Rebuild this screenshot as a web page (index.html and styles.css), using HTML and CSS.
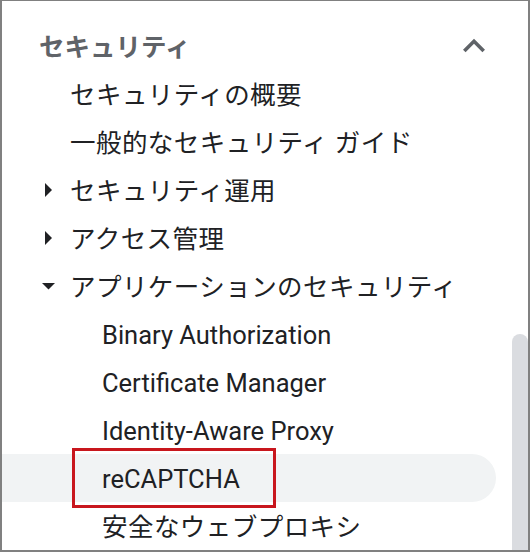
FILE: index.html
```html
<!DOCTYPE html>
<html lang="ja">
<head>
<meta charset="utf-8">
<title>セキュリティ</title>
<link rel="stylesheet" href="styles.css">
</head>
<body>
<div class="frame">
  <nav class="nav">
    <div class="nav-head">
      <span class="nav-title">セキュリティ</span>
      <svg class="chevron" viewBox="0 0 24 24" width="44" height="44"><path d="M12 8l-6 6 1.41 1.41L12 10.83l4.59 4.58L18 14z"/></svg>
    </div>
    <ul class="tree">
      <li class="row lvl1"><span class="label ja">セキュリティの概要</span></li>
      <li class="row lvl1"><span class="label ja">一般的なセキュリティ ガイド</span></li>
      <li class="row lvl1 has-toggle">
        <span class="toggle"><svg viewBox="0 0 14 14" width="14" height="14"><polygon points="3,0 10,7 3,14"/></svg></span>
        <span class="label ja">セキュリティ運用</span>
      </li>
      <li class="row lvl1 has-toggle">
        <span class="toggle"><svg viewBox="0 0 14 14" width="14" height="14"><polygon points="3,0 10,7 3,14"/></svg></span>
        <span class="label ja">アクセス管理</span>
      </li>
      <li class="row lvl1 has-toggle">
        <span class="toggle"><svg viewBox="0 0 14 14" width="14" height="14"><polygon points="0,4 13,4 6.5,10.5"/></svg></span>
        <span class="label ja">アプリケーションのセキュリティ</span>
      </li>
      <li class="row lvl2"><span class="label">Binary Authorization</span></li>
      <li class="row lvl2"><span class="label">Certificate Manager</span></li>
      <li class="row lvl2"><span class="label">Identity-Aware Proxy</span></li>
      <li class="row lvl2 active"><span class="label">reCAPTCHA</span><span class="callout"></span></li>
      <li class="row lvl2"><span class="label ja">安全なウェブプロキシ</span></li>
    </ul>
  </nav>
  <div class="scroll-thumb"></div>
</div>
</body>
</html>
```

FILE: styles.css
```css
html, body {
  margin: 0;
  padding: 0;
  background: #ffffff;
}

.frame {
  position: relative;
  width: 530px;
  height: 552px;
  box-sizing: border-box;
  border-style: solid;
  border-color: #808080;
  border-width: 1px 2px 2px 2px;
  overflow: hidden;
  font-family: Roboto, "Noto Sans CJK JP", sans-serif;
  font-size: 25.5px;
  color: #202124;
}

.nav {
  padding-top: 21px;
  width: 494px;
}

.nav-head {
  display: flex;
  align-items: center;
  justify-content: space-between;
  height: 48px;
  padding-left: 37px;
}

.nav-title {
  font-weight: 700;
  color: #5f6368;
  line-height: 48px;
  position: relative;
  top: 1px;
}

.chevron {
  fill: #5f6368;
}

.tree {
  list-style: none;
  margin: 0;
  padding: 0;
}

.row {
  display: flex;
  align-items: center;
  height: 48px;
  line-height: 48px;
  white-space: nowrap;
}

.label {
  position: relative;
  top: 1px;
}

.ja {
  letter-spacing: 0.45px;
}

.lvl1 {
  padding-left: 68px;
}

.lvl1.has-toggle {
  padding-left: 36px;
}

.lvl2 {
  padding-left: 100px;
}

.toggle {
  display: flex;
  align-items: center;
  width: 32px;
  height: 48px;
}

.toggle svg {
  margin-left: 4px;
  fill: #202124;
}

.active {
  position: relative;
  background: #f1f3f4;
  border-radius: 0 24px 24px 0;
}

.callout {
  position: absolute;
  left: 70px;
  top: -6px;
  width: 204px;
  height: 60px;
  box-sizing: border-box;
  border: 3px solid #c8161d;
}

.scroll-thumb {
  position: absolute;
  right: 0;
  top: 333px;
  width: 16px;
  height: 240px;
  background: #dadce0;
  border-radius: 8px 8px 0 0;
}
```
